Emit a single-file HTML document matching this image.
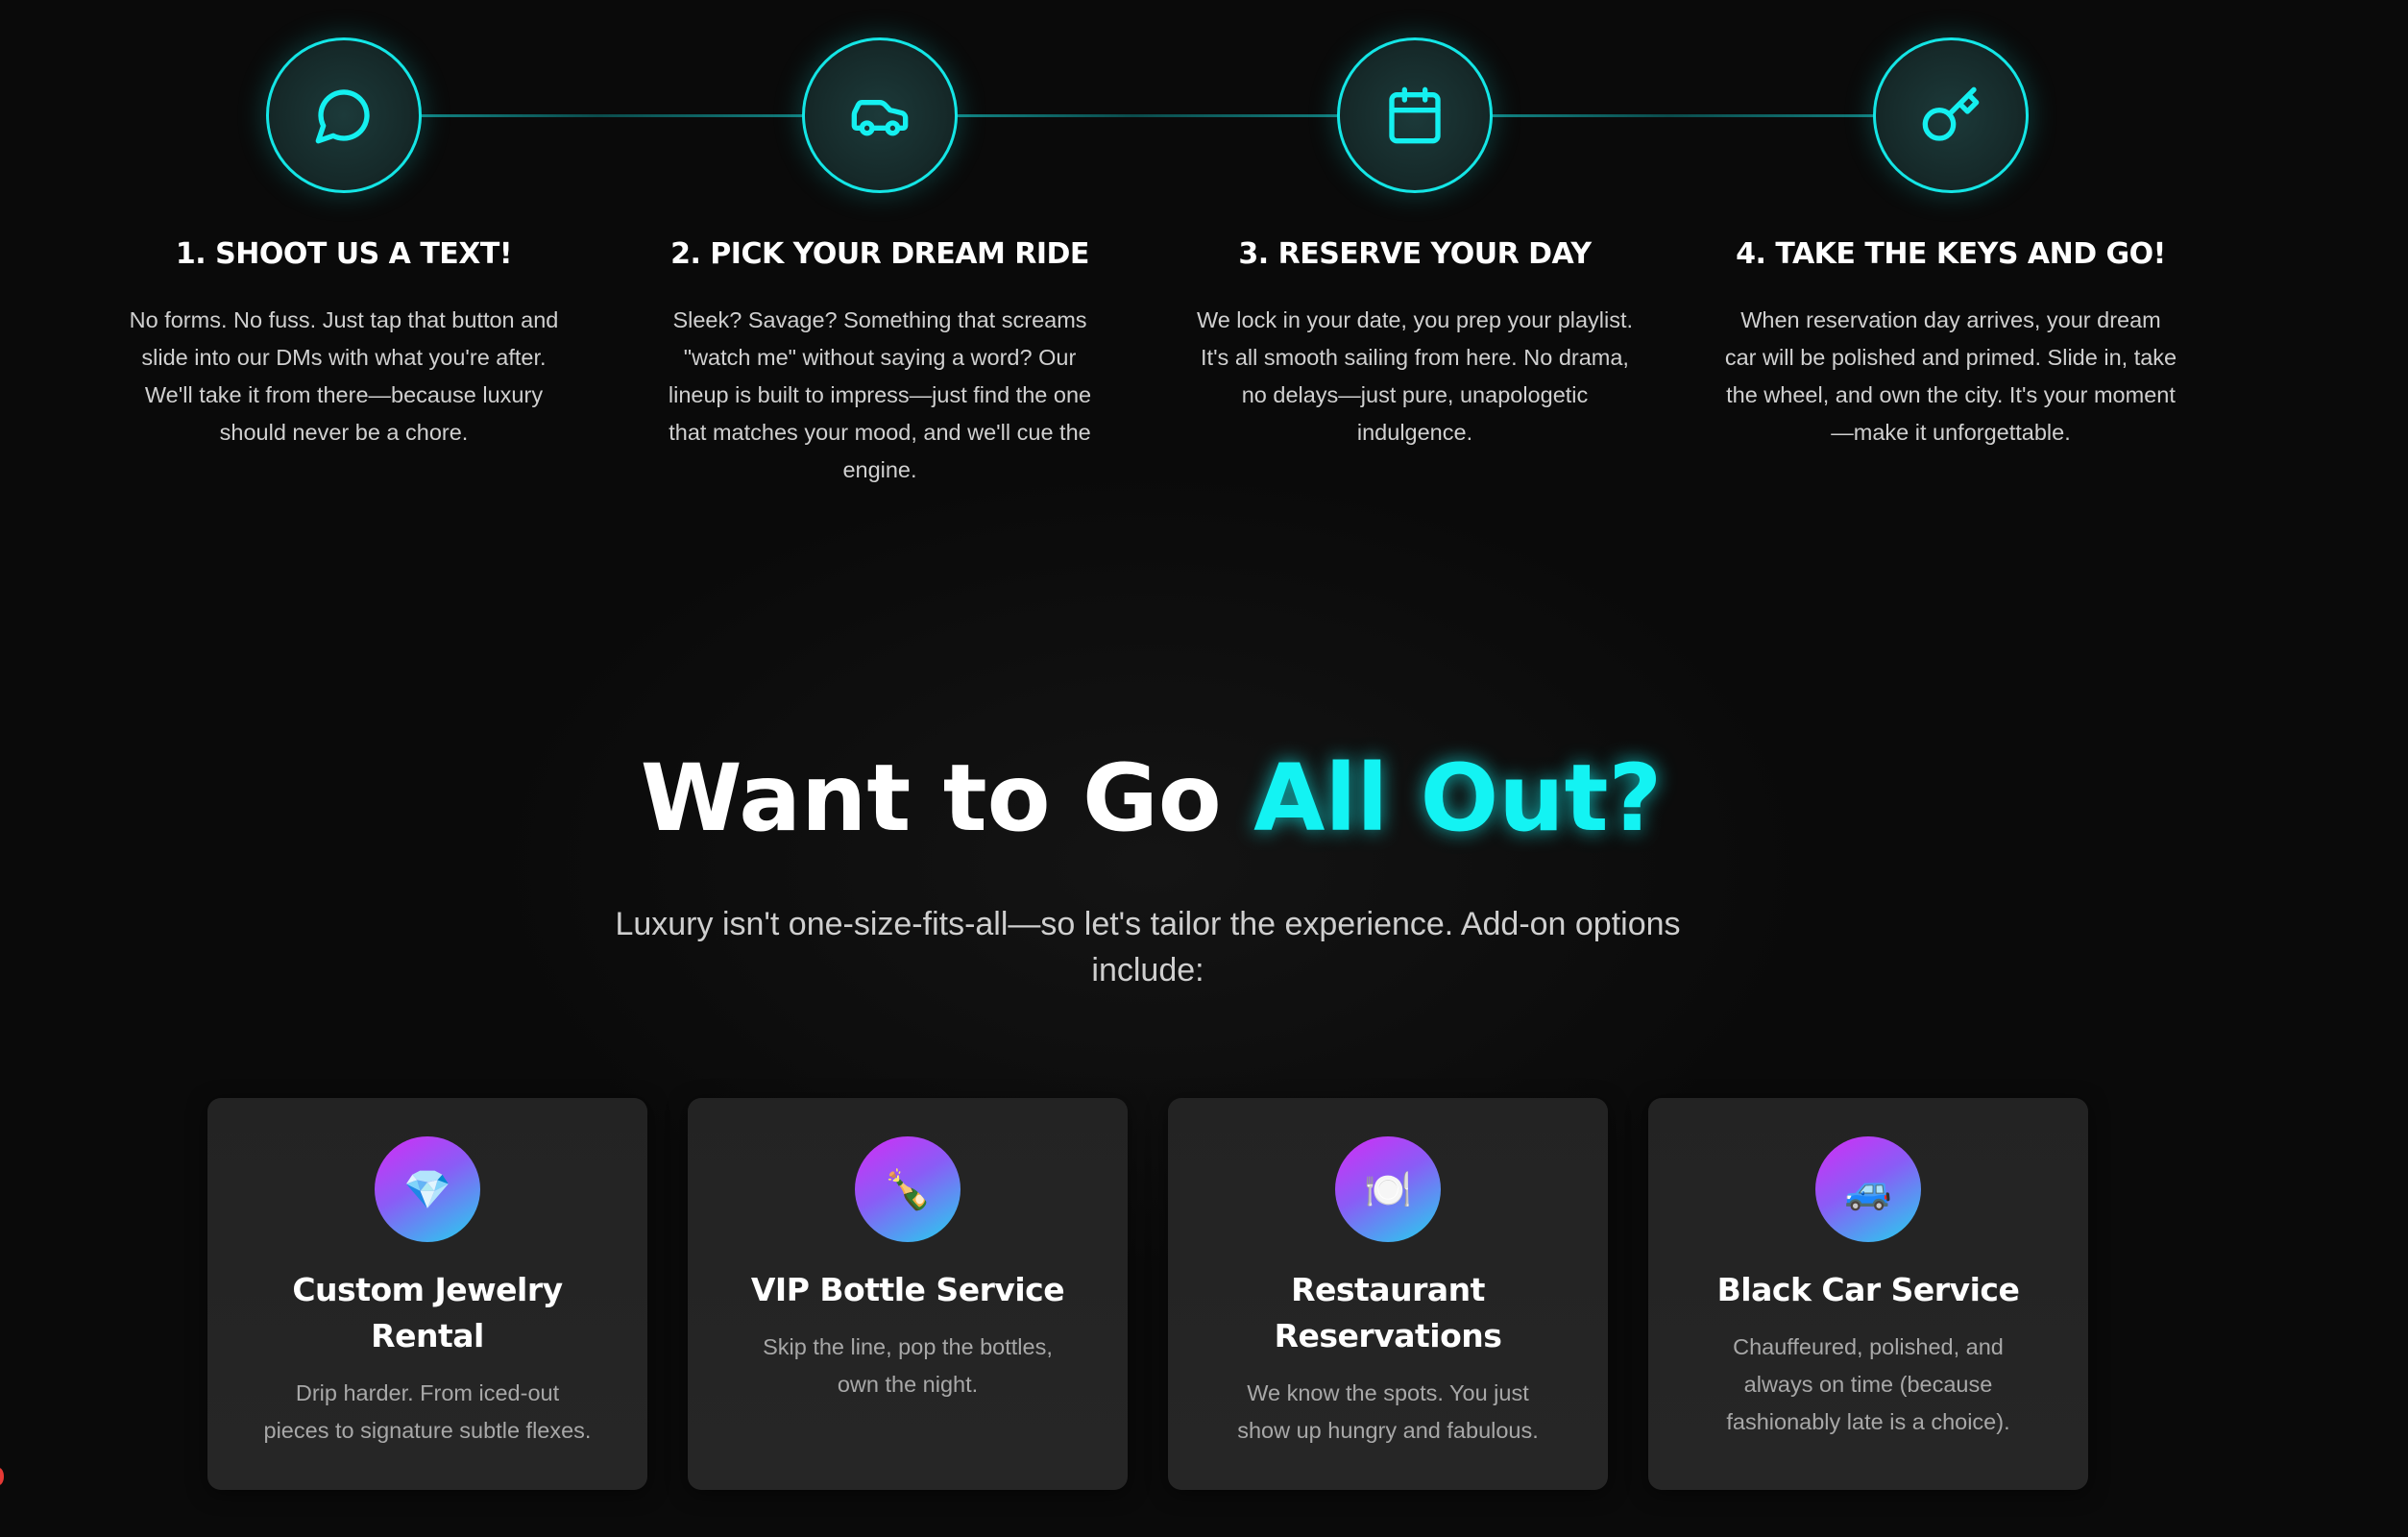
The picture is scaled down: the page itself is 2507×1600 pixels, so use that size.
<!DOCTYPE html>
<html><head><meta charset="utf-8">
<style>
*{margin:0;padding:0;box-sizing:border-box}
html,body{width:2507px;height:1600px;overflow:hidden}
body{background:#0a0a0a;font-family:"Liberation Sans","DejaVu Sans",sans-serif;position:relative;
background:radial-gradient(ellipse 1000px 600px at 1200px 900px,#141414 0%,#0a0a0a 70%);}
.line{position:absolute;top:119px;height:3px;background:linear-gradient(90deg,#138b8b,#0b4c4c 50%,#127c7c)}
.circ{position:absolute;top:39px;width:162px;height:162px;border-radius:50%;border:3px solid #14e6e6;
background:radial-gradient(circle,#1c3a3a 0%,#162a2a 60%,#0f1c1c 100%);box-shadow:0 0 30px rgba(20,230,230,.25);display:flex;align-items:center;justify-content:center}
.circ svg{width:64px;height:64px;stroke:#14f0f0;fill:none;stroke-width:2;stroke-linecap:round;stroke-linejoin:round}
.step{position:absolute;top:242px;width:520px;text-align:center}
.step h3{font-family:"DejaVu Sans","Liberation Sans",sans-serif;font-size:30px;font-weight:bold;color:#fff;letter-spacing:-0.5px;height:50px;line-height:46px;white-space:nowrap}
.step p{color:#d0d0d0;font-size:23.5px;line-height:39px;margin-top:22px;padding:0 22px}
h1{position:absolute;top:775px;left:0;width:2507px;text-align:center;font-family:"DejaVu Sans","Liberation Sans",sans-serif;font-size:96px;font-weight:bold;color:#fff;letter-spacing:0px;padding-right:110px}
h1 span{color:#13f3f3;text-shadow:0 0 20px rgba(19,243,243,.7)}
.sub{position:absolute;top:938px;left:590px;width:1210px;text-align:center;color:#cfcfcf;font-size:34px;line-height:48px}
.card{position:absolute;top:1143px;width:458px;height:408px;background:linear-gradient(180deg,#232323,#262626);border-radius:14px;text-align:center;box-shadow:0 4px 20px rgba(0,0,0,.5)}
.ic{width:110px;height:110px;border-radius:50%;margin:40px auto 0;background:linear-gradient(150deg,#d42cf5,#8a5cf6 45%,#22d3ee);display:flex;align-items:center;justify-content:center;font-size:40px}
.card h4{font-family:"DejaVu Sans","Liberation Sans",sans-serif;color:#fff;font-size:33px;font-weight:bold;line-height:48px;margin:26px 40px 0;letter-spacing:-0.5px}
.card p{color:#a8a8a8;font-size:23.5px;line-height:39px;margin:16px 58px 0}
</style></head><body>
<div class="line" style="left:408px;width:428px"></div>
<div class="line" style="left:966px;width:428px"></div>
<div class="line" style="left:1523px;width:428px"></div>

<div class="circ" style="left:277px"><svg viewBox="0 0 24 24"><path d="M7.9 20A9 9 0 1 0 4 16.1L2 22Z"/></svg></div>
<div class="circ" style="left:835px"><svg viewBox="0 0 24 24"><path d="M19 17h2c.6 0 1-.4 1-1v-3c0-.9-.7-1.7-1.5-1.9C18.7 10.6 16 10 16 10s-1.3-1.4-2.2-2.3c-.5-.4-1.1-.7-1.8-.7H5c-.6 0-1.1.4-1.4.9l-1.4 2.9A3.7 3.7 0 0 0 2 12v4c0 .6.4 1 1 1h2"/><circle cx="7" cy="17" r="2"/><path d="M9 17h6"/><circle cx="17" cy="17" r="2"/></svg></div>
<div class="circ" style="left:1392px"><svg viewBox="0 0 24 24"><rect x="3" y="4" width="18" height="18" rx="2"/><path d="M16 2v4M8 2v4M3 10h18"/></svg></div>
<div class="circ" style="left:1950px"><svg viewBox="0 0 24 24"><circle cx="7.5" cy="15.5" r="5.5"/><path d="m21 2-9.6 9.6M15.5 7.5l3 3L22 7l-3-3"/></svg></div>

<div class="step" style="left:98px"><h3>1. SHOOT US A TEXT!</h3><p>No forms. No fuss. Just tap that button and slide into our DMs with what you're after. We'll take it from there—because luxury should never be a chore.</p></div>
<div class="step" style="left:656px"><h3>2. PICK YOUR DREAM RIDE</h3><p>Sleek? Savage? Something that screams "watch me" without saying a word? Our lineup is built to impress—just find the one that matches your mood, and we'll cue the engine.</p></div>
<div class="step" style="left:1213px"><h3>3. RESERVE YOUR DAY</h3><p>We lock in your date, you prep your playlist. It's all smooth sailing from here. No drama, no delays—just pure, unapologetic indulgence.</p></div>
<div class="step" style="left:1771px"><h3>4. TAKE THE KEYS AND GO!</h3><p>When reservation day arrives, your dream car will be polished and primed. Slide in, take the wheel, and own the city. It's your moment—make it unforgettable.</p></div>

<h1>Want to Go <span>All Out?</span></h1>
<div class="sub">Luxury isn't one-size-fits-all—so let's tailor the experience. Add-on options include:</div>

<div class="card" style="left:216px"><div class="ic">💎</div><h4>Custom Jewelry Rental</h4><p>Drip harder. From iced-out pieces to signature subtle flexes.</p></div>
<div class="card" style="left:716px"><div class="ic">🍾</div><h4>VIP Bottle Service</h4><p>Skip the line, pop the bottles, own the night.</p></div>
<div class="card" style="left:1216px"><div class="ic">🍽️</div><h4>Restaurant Reservations</h4><p>We know the spots. You just show up hungry and fabulous.</p></div>
<div class="card" style="left:1716px"><div class="ic">🚙</div><h4>Black Car Service</h4><p>Chauffeured, polished, and always on time (because fashionably late is a choice).</p></div>
<div style="position:absolute;left:-6px;top:1528px;width:10px;height:18px;border-radius:50%;background:#e53935"></div>
</body></html>
